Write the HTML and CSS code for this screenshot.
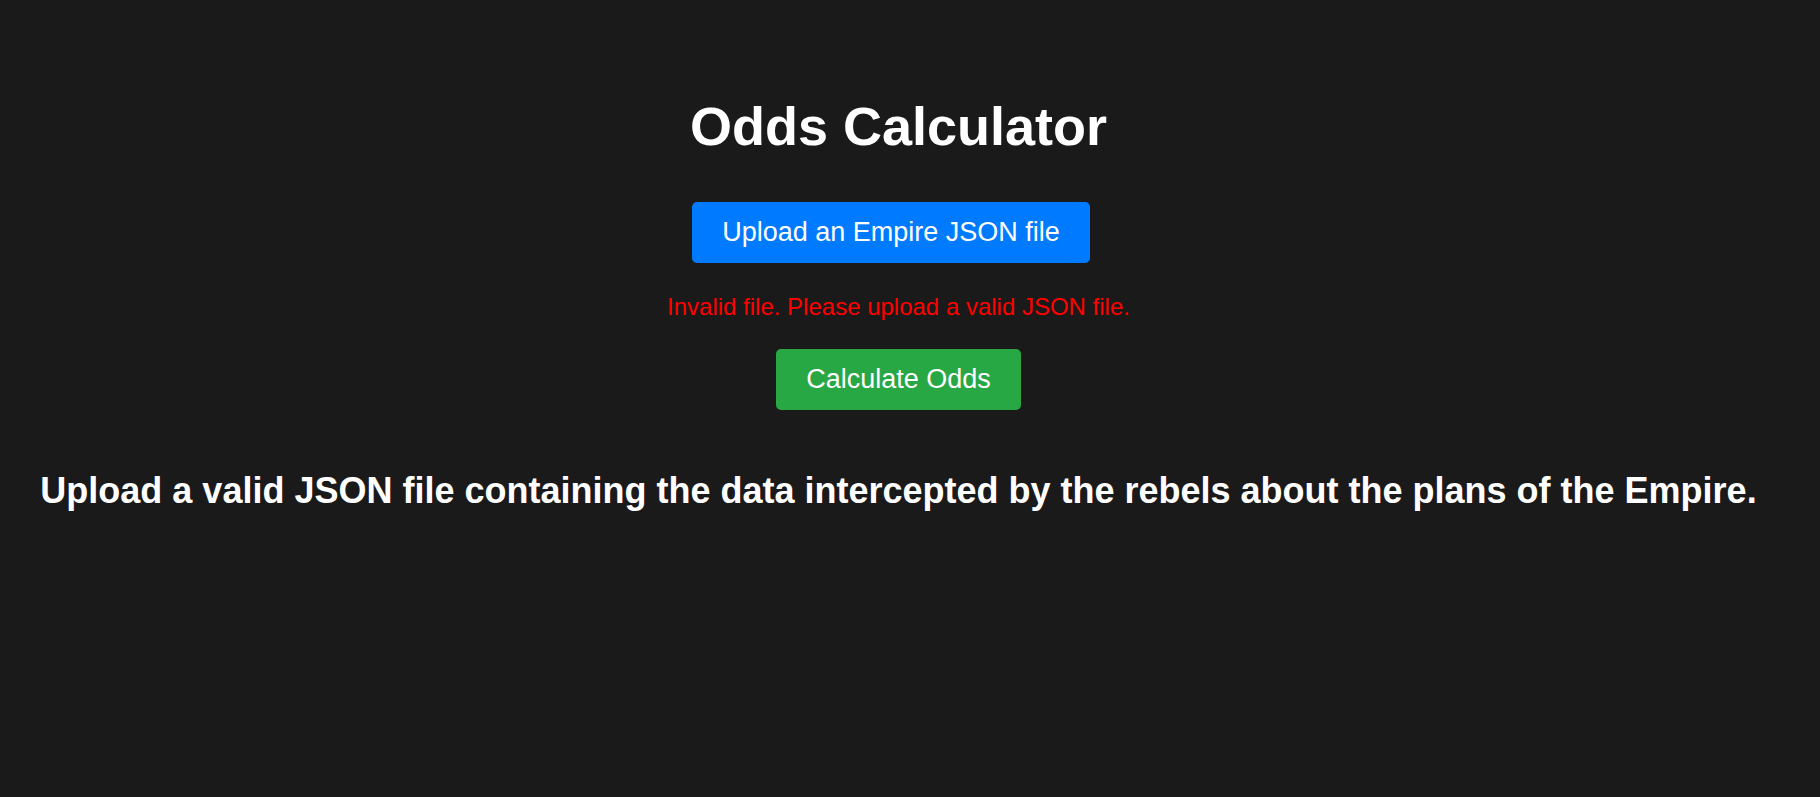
FILE: index.html
```html
<!DOCTYPE html>
<html lang="en">
<head>
<meta charset="utf-8">
<title>Odds Calculator</title>
<link rel="stylesheet" href="styles.css">
</head>
<body>
<div class="app">
  <h1 class="title">Odds Calculator</h1>
  <div class="upload-row">
    <label class="btn btn-upload" for="file">Upload an Empire JSON file</label>
    <input class="file-input" id="file" type="file" accept=".json">
  </div>
  <p class="error">Invalid file. Please upload a valid JSON file.</p>
  <button class="btn btn-calc" type="button">Calculate Odds</button>
  <h2 class="message">Upload a valid JSON file containing the data intercepted by the rebels about the plans of the Empire.</h2>
</div>
</body>
</html>
```
FILE: styles.css
```css
html, body {
  margin: 0;
  padding: 0;
  background: #1a1a1a;
}

body {
  font-family: "Liberation Sans", Arial, Helvetica, sans-serif;
  font-size: 18px;
  color: #ffffff;
}

.app {
  display: flex;
  flex-direction: column;
  align-items: center;
  text-align: center;
  padding: 95px 31px 0 8px;
}

.title {
  margin: 0;
  font-size: 54px;
  font-weight: bold;
  line-height: normal;
}

.upload-row {
  margin-top: 45px;
  display: flex;
}

.btn {
  display: inline-block;
  border: none;
  border-radius: 5px;
  padding: 15px 30px;
  font-family: inherit;
  font-size: 27px;
  line-height: normal;
  color: #ffffff;
  cursor: pointer;
}

.btn-upload {
  background: #007bff;
  margin-right: 15px;
}

.file-input {
  display: none;
}

.error {
  margin: 30px 0 0;
  font-size: 24px;
  line-height: normal;
  color: #ff0000;
}

.btn-calc {
  margin-top: 28px;
  background: #28a745;
}

.message {
  margin: 60px 0 0;
  font-size: 36px;
  font-weight: bold;
  line-height: normal;
  white-space: nowrap;
}
```
